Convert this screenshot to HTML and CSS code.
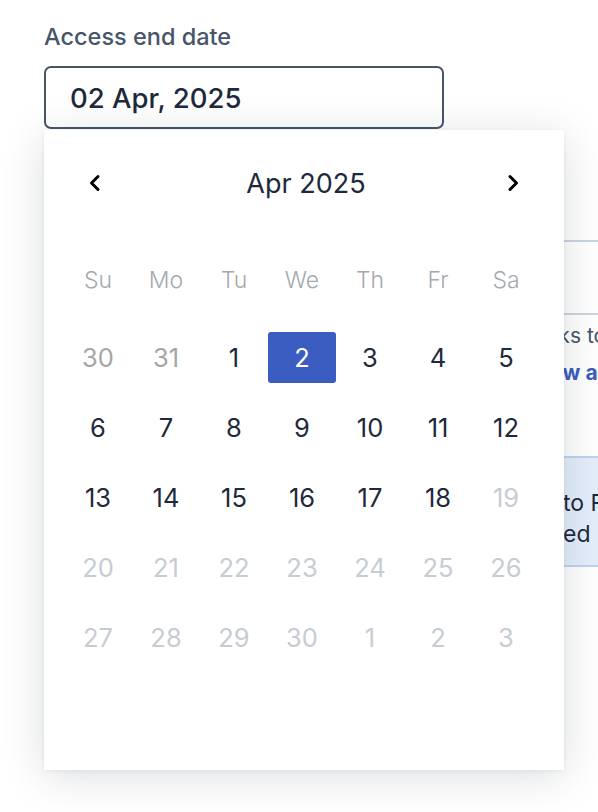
FILE: index.html
```html
<!DOCTYPE html>
<html lang="en">
<head>
<meta charset="utf-8">
<title>Access end date</title>
<link rel="stylesheet" href="styles.css">
</head>
<body>
<div class="page">
  <label class="field-label" for="end-date">Access end date</label>
  <div class="date-input" id="end-date">02 Apr, 2025</div>

  <div class="behind">
    <div class="panel-row"></div>
    <p class="desc">Links to<br><a class="link">View access</a></p>
    <div class="info">
      <span>to Folders</span>
      <span>ed</span>
    </div>
  </div>

  <div class="picker">
    <div class="picker-head">
      <button class="nav" aria-label="Previous month">
        <svg width="16" height="18" viewBox="0 0 16 18"><path d="M11 2.5 L4.5 9 L11 15.5" fill="none" stroke="#000" stroke-width="3" stroke-linecap="round" stroke-linejoin="round"/></svg>
      </button>
      <div class="month">Apr 2025</div>
      <button class="nav" aria-label="Next month">
        <svg width="16" height="18" viewBox="0 0 16 18"><path d="M5 2.5 L11.5 9 L5 15.5" fill="none" stroke="#000" stroke-width="3" stroke-linecap="round" stroke-linejoin="round"/></svg>
      </button>
    </div>
    <div class="weekdays">
      <span>Su</span><span>Mo</span><span>Tu</span><span>We</span><span>Th</span><span>Fr</span><span>Sa</span>
    </div>
    <div class="days">
      <span class="day other">30</span><span class="day other">31</span><span class="day">1</span><span class="day selected">2</span><span class="day">3</span><span class="day">4</span><span class="day">5</span>
      <span class="day">6</span><span class="day">7</span><span class="day">8</span><span class="day">9</span><span class="day">10</span><span class="day">11</span><span class="day">12</span>
      <span class="day">13</span><span class="day">14</span><span class="day">15</span><span class="day">16</span><span class="day">17</span><span class="day">18</span><span class="day off">19</span>
      <span class="day off">20</span><span class="day off">21</span><span class="day off">22</span><span class="day off">23</span><span class="day off">24</span><span class="day off">25</span><span class="day off">26</span>
      <span class="day off">27</span><span class="day off">28</span><span class="day off">29</span><span class="day off">30</span><span class="day off">1</span><span class="day off">2</span><span class="day off">3</span>
    </div>
  </div>
</div>
</body>
</html>
```

FILE: styles.css
```css
html, body {
  margin: 0;
  padding: 0;
  overflow: hidden;
  background: #ffffff;
}

body {
  font-family: Inter, "Noto Sans", "Liberation Sans", sans-serif;
  color: #1e293b;
}

.page {
  position: relative;
  width: 598px;
  height: 812px;
  padding: 25px 0 0 44px;
  box-sizing: border-box;
}

.field-label {
  display: block;
  font-size: 23.5px;
  line-height: 24px;
  font-weight: 500;
  color: #475569;
  margin-bottom: 17px;
}

.date-input {
  width: 400px;
  height: 63px;
  box-sizing: border-box;
  border: 2px solid #475569;
  border-radius: 7px;
  padding-left: 24px;
  display: flex;
  align-items: center;
  font-size: 27.5px;
  font-weight: 500;
  color: #1e293b;
}

.behind {
  margin-left: 485px;
  width: 400px;
}

.panel-row {
  margin-top: 111px;
  height: 71px;
  border-top: 2px solid #cbd5e1;
  border-bottom: 2px solid #cbd5e1;
}

.desc {
  margin: 2px 0 0 0;
  font-size: 21px;
  line-height: 37px;
  color: #475569;
}

.link {
  font-weight: 700;
  color: #3b5cc0;
}

.info {
  margin-top: 65px;
  height: 111px;
  box-sizing: border-box;
  border: 2px solid #bcd3f1;
  background: #e4eefb;
  padding: 30px 0 0 32px;
  display: flex;
  flex-direction: column;
  font-size: 23px;
  line-height: 31px;
  color: #1e293b;
}

.picker {
  position: absolute;
  left: 44px;
  top: 130px;
  width: 520px;
  height: 640px;
  box-sizing: border-box;
  background: #ffffff;
  padding: 38px 20px 0 20px;
  box-shadow: 0 6px 40px rgba(30, 41, 59, 0.16), 0 1px 4px rgba(30, 41, 59, 0.06);
}

.picker-head {
  height: 30px;
  display: flex;
  align-items: center;
  justify-content: space-between;
  padding: 0 19px;
}

.nav {
  width: 24px;
  height: 24px;
  padding: 0;
  border: 0;
  background: none;
  display: flex;
  align-items: center;
  justify-content: center;
}

.month {
  font-size: 27px;
  font-weight: 400;
  color: #1e293b;
  margin-left: 4px;
}

.weekdays {
  margin-top: 62px;
  display: grid;
  grid-template-columns: repeat(7, 68px);
  height: 40px;
  align-items: center;
  font-size: 23px;
  font-weight: 300;
  color: #a5a9ae;
}

.weekdays span {
  text-align: center;
}

.days {
  margin-top: 32px;
  display: grid;
  grid-template-columns: repeat(7, 68px);
  grid-auto-rows: 51px;
  row-gap: 19px;
}

.day {
  display: flex;
  align-items: center;
  justify-content: center;
  font-size: 25.5px;
  font-weight: 400;
  color: #1e293b;
  border-radius: 3px;
}

.day.other {
  color: #a6a6a6;
}

.day.off {
  color: #c7ccd3;
}

.day.selected {
  background: #3b5cc0;
  color: #ffffff;
}
```
